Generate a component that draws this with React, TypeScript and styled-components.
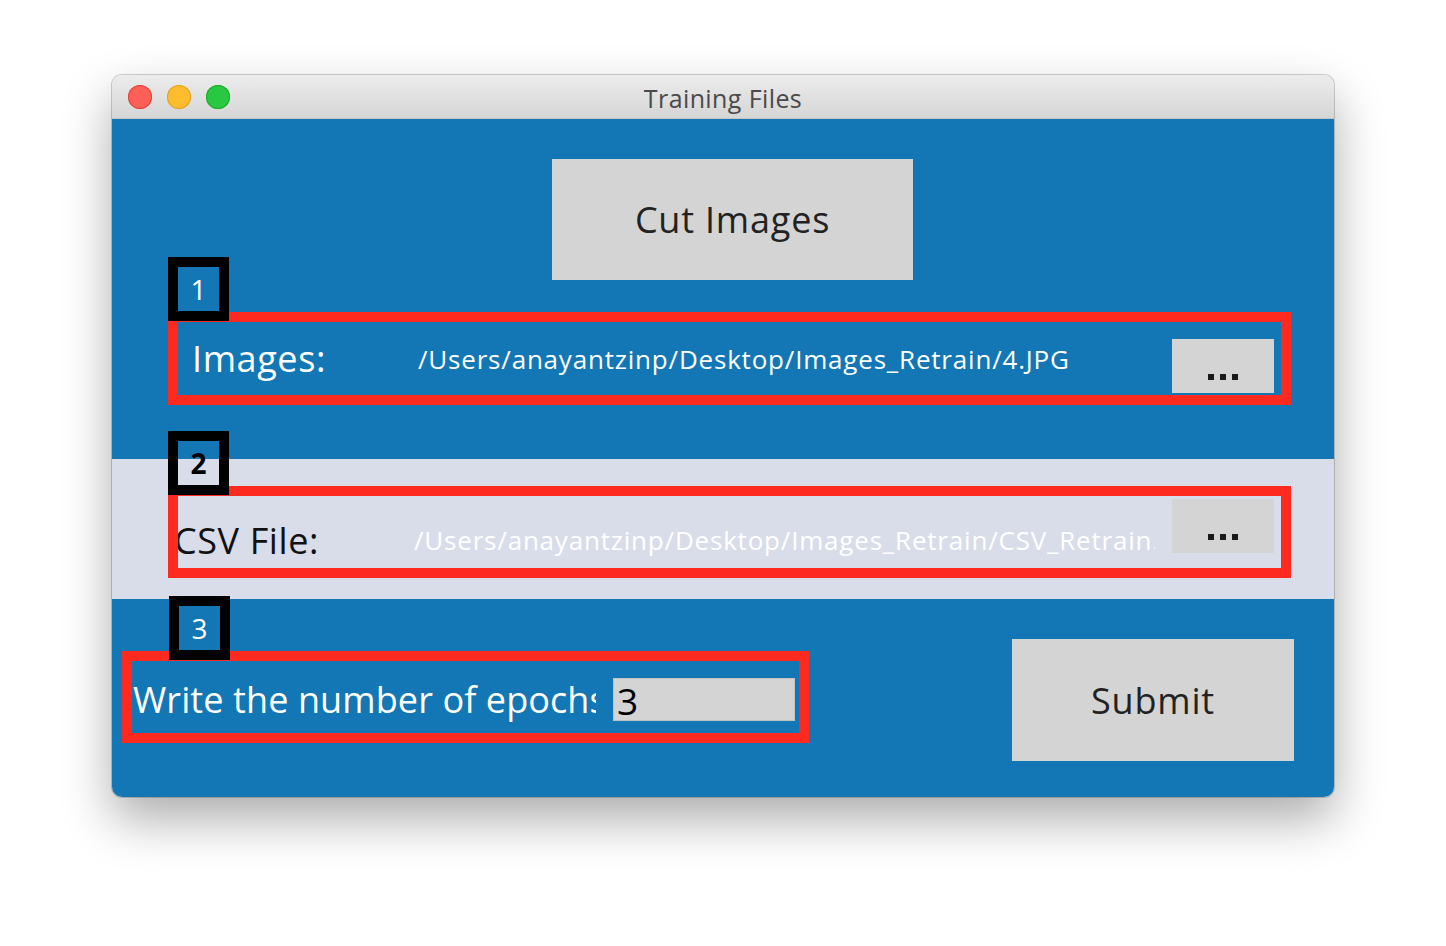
import React from "react";
import styled, { createGlobalStyle } from "styled-components";

const GlobalStyle = createGlobalStyle`
  html, body {
    margin: 0;
    padding: 0;
    background: #ffffff;
    font-family: "Open Sans", "Liberation Sans", sans-serif;
  }
`;

const Page = styled.div`
  width: 1446px;
  height: 946px;
  padding: 75px 0 0 112px;
  box-sizing: border-box;
`;

const Window = styled.div`
  width: 1222px;
  height: 722px;
  border-radius: 10px;
  overflow: hidden;
  display: flex;
  flex-direction: column;
  box-shadow: 0 22px 50px rgba(0, 0, 0, 0.33), 0 0 0 1px rgba(0, 0, 0, 0.18);
`;

const TitleBar = styled.div`
  height: 44px;
  flex-shrink: 0;
  display: flex;
  align-items: center;
  position: relative;
  background: linear-gradient(#ececec, #d6d6d6);
  border-bottom: 1px solid #c4c4c4;
  box-sizing: border-box;
`;

const Lights = styled.div`
  display: flex;
  gap: 15px;
  padding-left: 16px;
`;

const Light = styled.span<{ $c: string; $b: string }>`
  width: 24px;
  height: 24px;
  border-radius: 50%;
  background: ${(p) => p.$c};
  box-shadow: inset 0 0 0 1px ${(p) => p.$b};
`;

const Title = styled.div`
  position: absolute;
  left: 0;
  right: 0;
  text-align: center;
  font-size: 25px;
  letter-spacing: 0.4px;
  color: #4a4a4a;
  top: 6px;
`;

const Body = styled.div`
  flex: 1;
  display: flex;
  flex-direction: column;
  background: #1277b4;
`;

const TopSection = styled.div`
  height: 340px;
  box-sizing: border-box;
  padding-top: 40px;
  display: flex;
  flex-direction: column;
`;

const BandSection = styled.div`
  height: 140px;
  box-sizing: border-box;
  padding-top: 27px;
  background: #d8dde9;
`;

const BottomSection = styled.div`
  flex: 1;
  display: flex;
  align-items: flex-start;
  padding: 40px 40px 0 10px;
`;

const GreyButton = styled.div<{ $w: number; $h: number }>`
  width: ${(p) => p.$w}px;
  height: ${(p) => p.$h}px;
  background: #d4d4d4;
  color: #222;
  font-size: 36px;
  letter-spacing: 0.8px;
  display: flex;
  align-items: center;
  justify-content: center;
  flex-shrink: 0;
`;

const CutButton = styled(GreyButton)`
  margin-left: 440px;
`;

const SubmitButton = styled(GreyButton)`
  margin-left: auto;
`;

const RedBox = styled.div<{ $w: number; $h: number; $top?: number }>`
  position: relative;
  width: ${(p) => p.$w}px;
  height: ${(p) => p.$h}px;
  margin-top: ${(p) => p.$top ?? 0}px;
  border: 10px solid #fe2a1f;
  box-sizing: border-box;
  flex-shrink: 0;
`;

const ImagesBox = styled(RedBox)`
  margin-left: 56px;
`;

const CsvBox = styled(RedBox)`
  margin-left: 56px;
`;

const Inner = styled.div`
  height: 100%;
  display: flex;
  align-items: center;
  overflow: hidden;
`;

const Badge = styled.div<{ $left: number; $dark?: boolean }>`
  position: absolute;
  left: ${(p) => p.$left}px;
  top: -65px;
  width: 61px;
  height: 64px;
  border: 10px solid #000;
  box-sizing: border-box;
  display: flex;
  align-items: center;
  justify-content: center;
  font-size: 28px;
  font-weight: ${(p) => (p.$dark ? 700 : 400)};
  color: ${(p) => (p.$dark ? "#000" : "#fff")};
  z-index: 2;
`;

const Label = styled.div<{
  $dark?: boolean;
  $w: number;
  $x: number;
  $dy?: number;
  $ls?: number;
}>`
  width: ${(p) => p.$w}px;
  margin-left: ${(p) => p.$x}px;
  padding-top: ${(p) => p.$dy ?? 0}px;
  flex-shrink: 0;
  font-size: 36px;
  letter-spacing: ${(p) => p.$ls ?? 0.6}px;
  white-space: nowrap;
  overflow: hidden;
  color: ${(p) => (p.$dark ? "#111" : "#fff")};
`;

const Path = styled.div<{ $w: number; $dy?: number }>`
  width: ${(p) => p.$w}px;
  padding-top: ${(p) => p.$dy ?? 0}px;
  flex-shrink: 0;
  font-size: 26px;
  letter-spacing: 0.8px;
  color: #fff;
  white-space: nowrap;
  overflow: hidden;
`;

const Dots = styled.div<{ $mt: number }>`
  align-self: flex-start;
  width: 102px;
  height: 54px;
  margin-top: ${(p) => p.$mt}px;
  background: #d4d4d4;
  flex-shrink: 0;
  display: flex;
  justify-content: center;
  gap: 6px;
  padding-top: 35px;
  box-sizing: border-box;
  margin-left: auto;
  margin-right: 7px;
  span {
    width: 6px;
    height: 6px;
    background: #1a1a1a;
  }
`;

const EpochInput = styled.div`
  width: 182px;
  height: 43px;
  margin-left: 17px;
  margin-top: 4px;
  background: #d4d4d4;
  border: 1px solid #c2c2c2;
  box-sizing: border-box;
  font-size: 37px;
  line-height: 43px;
  color: #000;
  padding-left: 3px;
  flex-shrink: 0;
`;

const Ellipsis = ({ mt }: { mt: number }) => (
  <Dots $mt={mt}>
    <span />
    <span />
    <span />
  </Dots>
);

export default function App() {
  return (
    <>
      <GlobalStyle />
      <Page>
        <Window>
          <TitleBar>
            <Lights>
              <Light $c="#fe5f57" $b="#e0443e" />
              <Light $c="#febc2e" $b="#dea123" />
              <Light $c="#28c840" $b="#1aab29" />
            </Lights>
            <Title>Training Files</Title>
          </TitleBar>
          <Body>
            <TopSection>
              <CutButton $w={361} $h={121}>
                Cut Images
              </CutButton>
              <ImagesBox $w={1123} $h={93} $top={32}>
                <Badge $left={-10}>1</Badge>
                <Inner>
                  <Label $w={226} $x={14}>
                    Images:
                  </Label>
                  <Path $w={700}>/Users/anayantzinp/Desktop/Images_Retrain/4.JPG</Path>
                  <Ellipsis mt={17} />
                </Inner>
              </ImagesBox>
            </TopSection>
            <BandSection>
              <CsvBox $w={1123} $h={92}>
                <Badge $left={-10} $dark>
                  2
                </Badge>
                <Inner>
                  <Label $w={240} $x={-4} $dy={16} $dark>
                    CSV File:
                  </Label>
                  <Path $w={741} $dy={16}>
                    /Users/anayantzinp/Desktop/Images_Retrain/CSV_Retrain.csv
                  </Path>
                  <Ellipsis mt={3} />
                </Inner>
              </CsvBox>
            </BandSection>
            <BottomSection>
              <RedBox $w={687} $h={92} $top={12}>
                <Badge $left={37}>3</Badge>
                <Inner>
                  <Label $w={463} $x={1} $dy={4} $ls={0.1}>
                    Write the number of epochs
                  </Label>
                  <EpochInput>3</EpochInput>
                </Inner>
              </RedBox>
              <SubmitButton $w={282} $h={122}>
                Submit
              </SubmitButton>
            </BottomSection>
          </Body>
        </Window>
      </Page>
    </>
  );
}
